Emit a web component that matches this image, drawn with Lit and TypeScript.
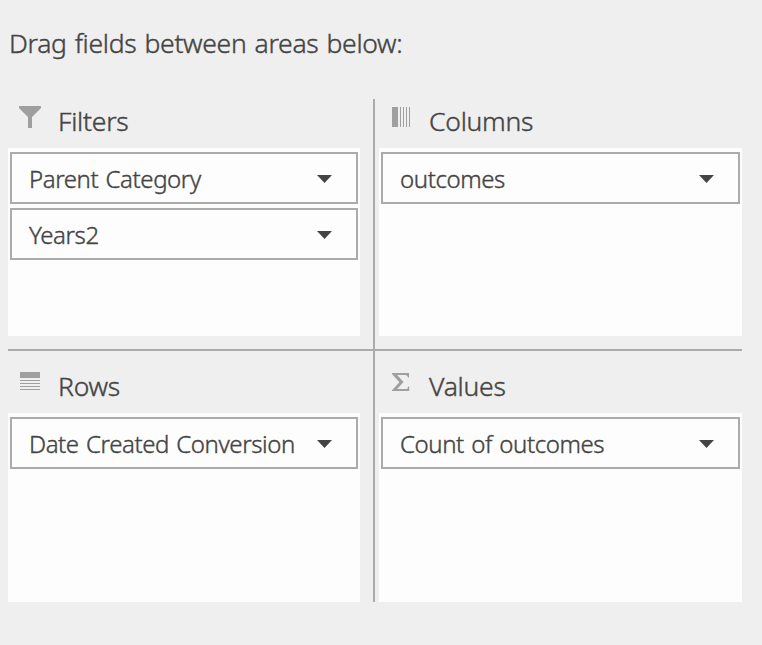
import { LitElement, html, css, svg } from "lit";
import { customElement, property } from "lit/decorators.js";

type AreaKind = "filters" | "columns" | "rows" | "values";

const icons: Record<AreaKind, unknown> = {
  filters: svg`<path d="M1 1H23V3L14 12V23H10V12L1 3Z"/>`,
  columns: svg`<path d="M3 2h6v20H3zM11 2h1v20h-1zM14 2h1v20h-1zM17 2h1v20h-1zM20 2h1v20h-1z"/>`,
  rows: svg`<path d="M2 2h20v6H2zM2 10h20v1H2zM2 13h20v1H2zM2 16h20v1H2zM2 19h20v1H2z"/>`,
  values: svg`<path d="M3 3H20V7.5H19Q18.8 5 16.5 5H8.2L14.5 12L8.2 19H17Q19 19 19.2 16.5H20.2V21H3V20.2L10.4 12.3L3 4Z"/>`,
};

@customElement("field-item")
class FieldItem extends LitElement {
  @property() label = "";
  static styles = css`
    :host {
      display: flex;
      align-items: center;
      justify-content: space-between;
      box-sizing: border-box;
      height: 52px;
      border: 2px solid #ababab;
      background: #fdfdfd;
      padding: 0 24px 0 17px;
      font-size: 24px;
      letter-spacing: -0.41px;
      word-spacing: 1.5px;
      line-height: 48px;
      white-space: nowrap;
    }
    .label {
      margin-top: 2px;
    }
    .arrow {
      width: 15px;
      height: 8px;
      fill: #444;
      margin-top: 2px;
    }
  `;
  render() {
    return html`<span class="label">${this.label}</span>
      <svg class="arrow" viewBox="0 0 15 8"><path d="M0 0H15L7.5 8Z" /></svg>`;
  }
}

@customElement("drop-area")
class DropArea extends LitElement {
  @property() kind: AreaKind = "filters";
  @property() heading = "";
  @property({ attribute: false }) fields: string[] = [];
  static styles = css`
    :host {
      display: flex;
      flex-direction: column;
      min-width: 0;
    }
    header {
      display: flex;
      height: 49px;
      flex: none;
    }
    .icon {
      width: 24px;
      height: 24px;
      margin: 6px 0 0 10px;
      fill: #9f9f9f;
    }
    .heading {
      margin-left: 16px;
      font-size: 26.5px;
      letter-spacing: -0.25px;
      line-height: 45px;
    }
    .list {
      flex: 1;
      display: flex;
      flex-direction: column;
      gap: 4px;
      padding: 4px 2px;
      background: #fdfdfd;
    }
  `;
  render() {
    return html`<header>
        <svg class="icon" viewBox="0 0 24 24">${icons[this.kind]}</svg>
        <span class="heading">${this.heading}</span>
      </header>
      <div class="list">
        ${this.fields.map((f) => html`<field-item .label=${f}></field-item>`)}
      </div>`;
  }
}

@customElement("app-root")
class AppRoot extends LitElement {
  static styles = css`
    :host {
      display: block;
      box-sizing: border-box;
      height: 645px;
      padding: 20px 20px 43px 8px;
      background: #efefef;
      color: #444;
      font-family: "Noto Sans", "Open Sans", sans-serif;
      font-weight: 300;
      -webkit-text-stroke: 0.4px #444;
    }
    .title {
      height: 79px;
      padding-left: 1px;
      font-size: 26.5px;
      letter-spacing: -0.3px;
      word-spacing: 1.5px;
      line-height: 47px;
      white-space: nowrap;
    }
    .grid {
      display: grid;
      grid-template-columns: 365px 2px 367px;
      grid-template-rows: 250px 2px 251px;
    }
    .left {
      padding-right: 13px;
    }
    .right {
      padding-left: 4px;
    }
    .top {
      padding-bottom: 13px;
    }
    .bottom {
      padding-top: 13px;
    }
    .vline {
      grid-area: 1 / 2 / 4 / 3;
      background: #ababab;
    }
    .hline {
      grid-area: 2 / 1 / 3 / 4;
      background: #ababab;
    }
    .c1 {
      grid-area: 1 / 1;
    }
    .c2 {
      grid-area: 1 / 3;
    }
    .c3 {
      grid-area: 3 / 1;
    }
    .c4 {
      grid-area: 3 / 3;
    }
  `;
  render() {
    return html`<div class="title">Drag fields between areas below:</div>
      <div class="grid">
        <div class="vline"></div>
        <div class="hline"></div>
        <drop-area class="c1 left top" kind="filters" heading="Filters" .fields=${["Parent Category", "Years2"]}></drop-area>
        <drop-area class="c2 right top" kind="columns" heading="Columns" .fields=${["outcomes"]}></drop-area>
        <drop-area class="c3 left bottom" kind="rows" heading="Rows" .fields=${["Date Created Conversion"]}></drop-area>
        <drop-area class="c4 right bottom" kind="values" heading="Values" .fields=${["Count of outcomes"]}></drop-area>
      </div>`;
  }
}
